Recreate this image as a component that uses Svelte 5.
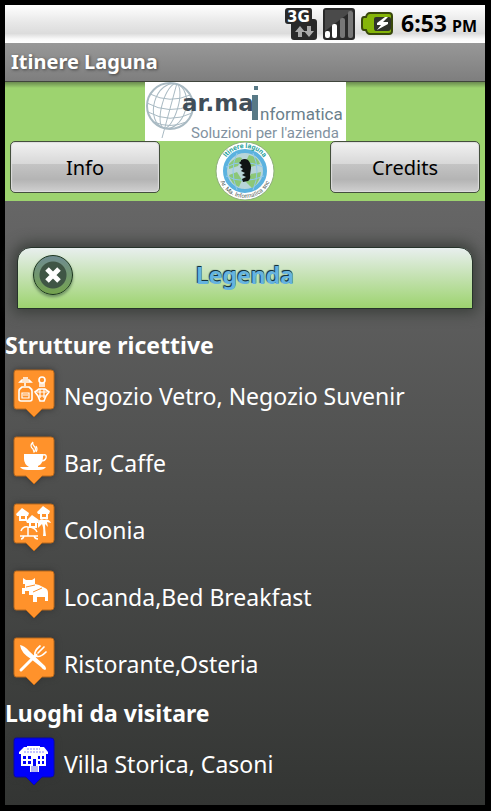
<script lang="ts">
	type Kind = 'glass' | 'cafe' | 'colony' | 'bed' | 'food' | 'villa';

	const sections: { title: string; color: string; edge: string; items: [Kind, string][] }[] = [
		{
			title: 'Strutture ricettive',
			color: '#ff922b',
			edge: '#b9691c',
			items: [
				['glass', 'Negozio Vetro, Negozio Suvenir'],
				['cafe', 'Bar, Caffe'],
				['colony', 'Colonia'],
				['bed', 'Locanda,Bed Breakfast'],
				['food', 'Ristorante,Osteria']
			]
		},
		{
			title: 'Luoghi da visitare',
			color: '#0000fa',
			edge: '#0808a8',
			items: [['villa', 'Villa Storica, Casoni']]
		}
	];

	let open = $state(true);
</script>

{#snippet hut(x: number, y: number)}
	<g transform="translate({x} {y})">
		<path d="M0 6 L6 0 L13 5 L12 8 H11 V13 H3 V8 H1Z" fill="#fff" />
		<path d="M5 8h4v3h-4z" fill="#ff922b" />
	</g>
{/snippet}

{#snippet glyph(kind: Kind)}
	{#if kind === 'glass'}
		<g fill="none" stroke="#fff" stroke-width="1.6">
			<path d="M15 16h11l-2-2h-7zM18 12h5M20 17v3" />
			<path d="M17 21h7q3 2 3 4v8q0 2-2 2h-9q-2 0-2-2v-8q0-2 3-4Z" />
			<path d="M17 27h7v5h-7zM18 29h5" stroke-width="1.2" />
			<circle cx="37" cy="14" r="3" />
			<path d="M34 18h6M34 20h6M34 23l-4 3 3 4 2 5h4l2-5 3-4-4-3Z" />
			<path d="M32 26h10M34 30h6M35 23v9M39 23v9" stroke-width="1.200" />
		</g>
	{:else if kind === 'cafe'}
		<path d="M19 22h19v3q0 7-5 9v1h8q-2 3-7 3H23q-6 0-8-3h9q-5-3-5-8Z" fill="#fff" transform="translate(0 -1)" />
		<path d="M38 22q4-1 3 3-1 3-5 3" fill="none" stroke="#fff" stroke-width="1.500" />
		<path d="M28 9q-4 4 0 7l1 3q3-3 0-6-2-2-1-4M31 13q2 3 0 6" fill="none" stroke="#fff" stroke-width="1.200" />
	{:else if kind === 'colony'}
		{@render hut(11, 8)}
		{@render hut(32, 6)}
		{@render hut(21, 15)}
		<path d="M33 22q2-4 6-2 5-2 7 3l-4-1 1 5-3-3q0 6 1 12h-3q1-7-1-12l-4 4v-4Z" fill="#fff" />
		<path d="M16 31q2-5 7-4 7 0 9 5M15 36h18M23 27v9M19 36q-1 3-3 3M29 36q1 3 4 3" fill="none" stroke="#fff" stroke-width="1.500" />
	{:else if kind === 'bed'}
		<path d="M18 11l3 2h6l3-2v6l4 1 6 3q3 1 3 5v8h-3v-4h-8v5h-4v-7h-4v-4h-4v3h-3v-6h3v-4h-2Z" fill="#fff" />
		<path d="M21 20l9-2M28 25l9-4" fill="none" stroke="#ff922b" />
	{:else if kind === 'food'}
		<path d="M15 11q5 1 9 6l16 15q2 3 0 4-2 0-4-3l-10-8q-10-6-11-14Z" fill="#fff" />
		<path d="M16 36l15-15" stroke="#fff" stroke-width="3" stroke-linecap="round" />
		<path d="M30 21q-1-4 5-9M31 22q4 2 10-4M33 19l6-6" fill="none" stroke="#fff" stroke-width="1.700" stroke-linecap="round" />
	{:else}
		<path d="M22 12h13v1h4l4 5v2h-2v12h-7v6h-9v-6h-9V20h-2v-2l5-5h3Z" fill="#fff" />
		<path d="M18 22h3v3h-3zM23 22h3v3h-3zM33 22h2v3h-2zM37 22h2v3h-2zM18 27h3v3h-3zM23 27h3v3h-3zM33 27h2v3h-2zM37 27h2v3h-2zM28 25h3v7h-3z" fill="#0000fa" />
		<path d="M22 15h13M19 18h20" stroke="#8585ff" stroke-dasharray="2 1" />
		<path d="M26 33h7M26 35h7M26 37h7" stroke="#6767e8" />
	{/if}
{/snippet}

<div class="screen">
	<div class="status">
		<svg width="32" height="32" viewBox="0 0 32 32" role="img" aria-label="3G">
			<path d="M3 0h22q2 0 2 3v8h2q3 0 3 3v15q0 3-3 3H9q-3 0-3-3V16H3q-3 0-3-3V3q0-3 3-3Z" fill="#292929" />
			<text x="2" y="14" class="net">3G</text>
			<path d="M15 18l5 6h-3v5h-4v-5h-3ZM22 18h4v5h3l-5 6-5-6h3Z" fill="#aaa" />
		</svg>
		<svg width="32" height="32" viewBox="0 0 32 32" role="img" aria-label="Segnale">
			<rect width="32" height="32" rx="3" fill="#292929" />
			<path d="M2 2h28L2 23Z" fill="#4a4a4a" />
			<rect x="2" y="23" width="5" height="7" rx="2" fill="#fff" />
			<rect x="9" y="16" width="5" height="14" rx="2" fill="#fff" />
			<rect x="17" y="10" width="5" height="20" rx="2" fill="#777" />
			<rect x="25" y="3" width="5" height="27" rx="2" fill="#777" />
		</svg>
		<svg width="32" height="32" viewBox="0 0 32 32" role="img" aria-label="Batteria in carica">
			<path d="M9 5h19q3 0 3 3v15q0 3-3 3H9q-3 0-4-4H3q-2 0-2-3v-7q0-3 2-3h2q1-4 4-4Z" fill="#85b509" stroke="#39480c" stroke-width="2" />
			<path d="M15 9h13q2 0 2 2v9q0 3-3 3H15q-2 0-2-3v-9q0-2 2-2Z" fill="#30332b" />
			<path d="M24 9l-8 6v2h4l-4 5 11-6v-2h-5l5-5Z" fill="#fff" />
		</svg>
		<time>6:53<small>PM</small></time>
	</div>

	<h1>Itinere Laguna</h1>

	<header>
		<svg class="brand" width="201" height="59" viewBox="0 0 201 59" role="img" aria-label="ar.ma Informatica">
			<rect width="201" height="59" fill="#fff" />
			<g fill="none" stroke="#a9bac3" stroke-width="1">
				<circle cx="25" cy="24" r="23" stroke-width="2" />
				<ellipse cx="25" cy="24" rx="8" ry="23" transform="rotate(16 25 24)" />
				<ellipse cx="25" cy="24" rx="16" ry="23" transform="rotate(16 25 24)" />
				<path d="M5 12q20 10 40 1M2 21q22 12 45 2M3 30q22 12 44 1M9 40q16 7 32 0M32 1L17 56" />
			</g>
			<text x="37" y="29" class="arma">ar.ma</text>
			<path d="M109 4h4v4h-4zM107 13h6v25h-6z" fill="#587986" />
			<text x="115" y="38" class="informatica">nformatica</text>
			<text x="46" y="56" class="slogan">Soluzioni per l'azienda</text>
		</svg>
		<div class="actions">
			<button type="button">Info</button>
			<svg width="60" height="60" viewBox="0 0 60 60" role="img" aria-label="Itinere laguna">
				<defs>
					<path id="arc-top" d="M7 30a23 23 0 0 1 46 0" />
					<path id="arc-bottom" d="M3 30a27 27 0 0 0 54 0" />
				</defs>
				<circle cx="30" cy="30" r="29" fill="#fff" stroke="#8fae7c" />
				<circle cx="30" cy="30" r="20" fill="#b8d5d9" stroke="#5bb2df" stroke-width="4" />
				<path d="M14 23q8-9 13-6l-4 8-9 3M34 14q9 2 11 9l-9 3-5-6M14 34l8-3 5 8-3 7q-8-3-10-12M36 33l10-2q-1 11-9 16l-6-6Z" fill="#8cc778" />
				<path d="M11 26q17-9 37 0M11 35q17 9 38 0M22 12q-8 18 0 37M38 12q8 18 0 37" fill="none" stroke="#8fc8ed" />
				<path d="M26 19q4-2 7 0 3 3 3 8l-1 7q1 4-2 6l-5 1-1-3 4-2-4-2 3-2-4-2 2-2-3-2 2-2-3-2 2-2Z" fill="#101414" />
				<text class="ring-top"><textPath href="#arc-top" startOffset="50%">Itinere laguna</textPath></text>
				<text class="ring-bottom"><textPath href="#arc-bottom" startOffset="50%">Ar. Ma. Informatica snc</textPath></text>
			</svg>
			<button type="button">Credits</button>
		</div>
	</header>

	<main>
		<div class="panel">
			<button type="button" class="close" aria-label="Chiudi" onclick={() => (open = !open)}>
				<svg width="18" height="18" viewBox="0 0 18 18">
					<path d="M3 3l12 12M15 3L3 15" stroke="#fff" stroke-width="5" />
				</svg>
			</button>
			<h2>Legenda</h2>
		</div>

		{#if open}
			{#each sections as section}
				<section>
					<h3>{section.title}</h3>
					<ul>
						{#each section.items as [kind, label]}
							<li>
								<svg class="pin" width="56" height="60" viewBox="0 0 56 60" aria-hidden="true">
									<path
										d="M11 4h35q3 0 3 3v33q0 3-3 3H37l-8 8-8-8H11q-2 0-2-3V7q0-3 2-3Z"
										fill={section.color}
										stroke={section.edge}
									/>
									{@render glyph(kind)}
								</svg>
								<span>{label}</span>
							</li>
						{/each}
					</ul>
				</section>
			{/each}
		{/if}
	</main>
</div>

<style>
	:global(body) {
		margin: 0;
		background: #000;
	}
	.screen {
		box-sizing: border-box;
		min-height: 100vh;
		display: flex;
		flex-direction: column;
		border: solid #000;
		border-width: 5px 6px 6px 5px;
		font-family: 'Noto Sans', 'Open Sans', sans-serif;
		color: #fff;
	}
	h1,
	h2,
	h3,
	ul {
		margin: 0;
		padding: 0;
	}
	svg {
		display: block;
		flex: none;
	}

	.status {
		display: flex;
		align-items: center;
		justify-content: flex-end;
		gap: 6px;
		height: 38px;
		padding-right: 8px;
		background: linear-gradient(#fff, #e8e8e8 45%, #dcdcdc 75%, #fafafa 90%, #fff);
	}
	.net {
		font: bold 15px 'DejaVu Sans', sans-serif;
		fill: #fff;
	}
	time {
		display: flex;
		align-items: baseline;
		gap: 5px;
		margin-left: 2px;
		color: #000;
		font-size: 23px;
		font-weight: 700;
		line-height: 36px;
	}
	small {
		font-size: 16px;
	}
	h1 {
		padding-left: 6px;
		height: 38px;
		background: linear-gradient(#989898, #7e7e7e);
		font-size: 20px;
		line-height: 37px;
		text-shadow: 1px 1px 3px #444;
	}

	header {
		background: linear-gradient(#6b8b50, #9dd36f 6px);
		border-top: 1px solid #40453c;
		padding: 0 5px;
	}
	.brand {
		margin: 0 auto;
	}
	.arma {
		font: bold 23px 'DejaVu Sans', sans-serif;
		fill: #414e59;
	}
	.informatica {
		font: 17px Roboto, sans-serif;
		fill: #6b7f8b;
	}
	.slogan {
		font: 15px Roboto, sans-serif;
		fill: #8292a0;
	}
	.actions {
		display: flex;
		justify-content: space-between;
		height: 60px;
	}
	.actions button {
		width: 150px;
		height: 52px;
		padding: 0;
		border: 1px solid #444f3d;
		border-radius: 5px;
		background: linear-gradient(#f2f2f2, #d8d8d8 43%, #c4c4c4 44%, #b4b4b4 75%, #d0d0d0);
		box-shadow: inset 0 0 1px 1px #ddd;
		color: #000;
		font-family: inherit;
		font-size: 20px;
	}
	.ring-top {
		font: bold 7px Roboto, sans-serif;
		fill: #2aa2a0;
		text-anchor: middle;
	}
	.ring-bottom {
		font: 6px Roboto, sans-serif;
		fill: #53615c;
		text-anchor: middle;
	}

	main {
		flex: 1;
		padding-top: 46px;
		background: linear-gradient(#666, #333533);
	}
	.panel {
		display: grid;
		grid-template-columns: 40px 1fr 40px;
		align-items: center;
		box-sizing: border-box;
		height: 62px;
		margin: 0 12px 20px;
		padding: 0 15px 6px;
		border: 1px solid #26332a;
		border-radius: 14px 14px 0 0;
		background: linear-gradient(#e8efee, #9dd36f);
		box-shadow: 0 0 14px 4px #3b3f3b;
	}
	.close {
		display: grid;
		place-items: center;
		width: 40px;
		height: 40px;
		padding: 0;
		border: 1px solid #1b351e;
		border-radius: 50%;
		background: radial-gradient(circle, #3f5545 13px, transparent 14px), linear-gradient(#6f8b91, #74a34e);
		box-shadow: 0 2px 3px #6b8d60;
	}
	h2 {
		color: #65b3e0;
		font-size: 23px;
		line-height: 32px;
		text-align: center;
		text-shadow: -1px -1px 1px #17323a, 0 -1px 0 #17323a;
	}
	h3 {
		font-size: 23px;
		line-height: 33px;
	}
	ul {
		list-style: none;
	}
	li {
		display: flex;
		align-items: center;
		gap: 3px;
		height: 67px;
		font-size: 23px;
	}
	.pin {
		filter: drop-shadow(0 0 3px #333);
	}
</style>
